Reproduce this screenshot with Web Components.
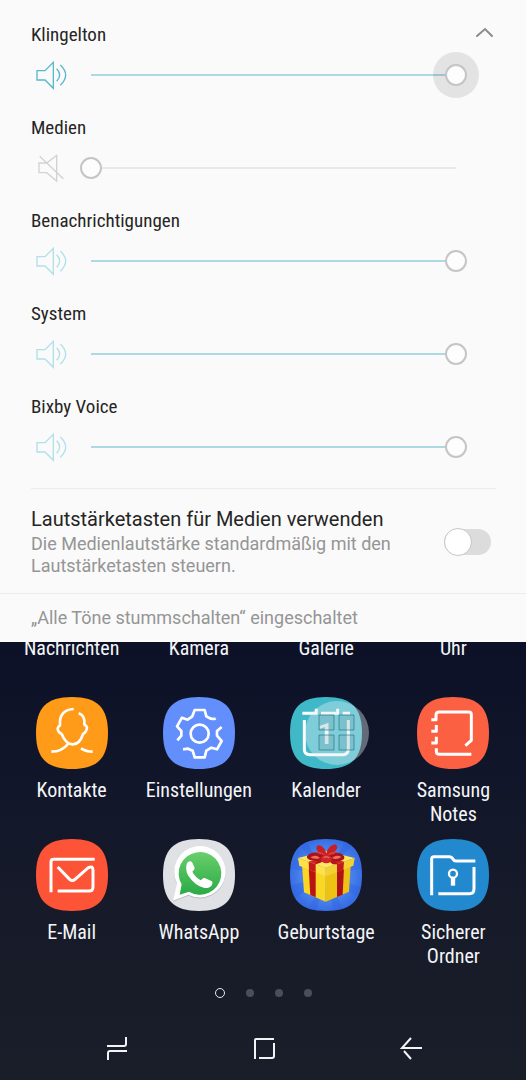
<!DOCTYPE html>
<html lang="de">
<head>
<meta charset="utf-8">
<meta name="viewport" content="width=device-width, initial-scale=1">
<title>Lautstärke</title>
<style>
	body {
		margin: 0;
		font-family: Roboto, "Liberation Sans", sans-serif;
	}
</style>
</head>
<body>
<phone-screen>
	<volume-panel slot="panel">
		<volume-row label="Klingelton" value="100" active>
			<collapse-button slot="action"></collapse-button>
		</volume-row>
		<volume-row label="Medien" value="0"></volume-row>
		<volume-row label="Benachrichtigungen" value="100"></volume-row>
		<volume-row label="System" value="100"></volume-row>
		<volume-row label="Bixby Voice" value="100"></volume-row>
		<toggle-row slot="option" label="Lautstärketasten für Medien verwenden">Die Medienlautstärke standardmäßig mit den Lautstärketasten steuern.</toggle-row>
		<span slot="status">„Alle Töne stummschalten“ eingeschaltet</span>
	</volume-panel>
	<app-grid>
		<app-tile slot="top">Nachrichten</app-tile>
		<app-tile slot="top">Kamera</app-tile>
		<app-tile slot="top">Galerie</app-tile>
		<app-tile slot="top">Uhr</app-tile>
		<app-tile icon="contacts">Kontakte</app-tile>
		<app-tile icon="settings">Einstellungen</app-tile>
		<app-tile icon="calendar">Kalender<touch-menu slot="overlay"></touch-menu></app-tile>
		<app-tile icon="notes">Samsung Notes</app-tile>
		<app-tile icon="mail">E-Mail</app-tile>
		<app-tile icon="whatsapp">WhatsApp</app-tile>
		<app-tile icon="gift">Geburtstage</app-tile>
		<app-tile icon="folder">Sicherer Ordner</app-tile>
	</app-grid>
	<page-dots count="4"></page-dots>
	<nav-bar></nav-bar>
</phone-screen>

<script>
const CONDENSED = `"Roboto Condensed", Roboto, "Liberation Sans", sans-serif`;

const SQUIRCLE = "M108 0C184 0 216 32 216 108S184 216 108 216S0 184 0 108S32 0 108 0Z";

const SPEAKER = `
	<path d="M6 35H30L55 10V88L30 63H6Z"/>
	<path d="M65 29Q83 48 65 67M76 18Q108 48 76 79"/>`;

const SPEAKER_MUTED = `<path d="M12 33H35L65 10V87L35 62H12ZM14 13L85 80"/>`;

// all app icons are drawn on a 216 unit square
const ICONS = {
	contacts: {
		color: "#ff9b18",
		art: `
			<path d="M113 36C86 37 70 54 72 80V85C63 90 64 98 68 104C70 108 74 109 77 111C84 128 96 142 110 142C126 142 136 128 141 111C150 107 152 100 153 92C152 86 148 86 145 82C147 66 142 54 128 49"/>
			<path d="M46 164C70 164 84 156 96 141M135 154C144 160 156 164 170 164"/>`
	},
	settings: {
		color: "#628ffc",
		art: `
			<circle cx="110" cy="110" r="27"/>
			<path d="M158 64Q148 70 130 58L125 39H95L88 58L74 68L57 62L42 88L55 102V116L43 130"/>
			<path d="M176 90L162 102V116L176 132L162 157L145 152L130 161L125 181H95L89 161L75 155L60 157"/>`
	},
	calendar: {
		color: "#3fb9c8",
		art: `
			<g stroke-width="9">
				<path d="M37 49H79V35M93 49H143V35M158 49H180"/>
				<path d="M43 69V157Q43 173 59 173H159Q175 173 175 157V69"/>
			</g>
			<text x="107" y="142" text-anchor="middle" font-family="Roboto, sans-serif" font-size="88" font-weight="500" fill="#fff" stroke="none">1</text>`
	},
	notes: {
		color: "#fb6043",
		art: `
			<g stroke-width="9">
				<path d="M43 68H57V54Q57 45 66 45H155Q163 45 163 53V130L145 146"/>
				<path d="M43 103H58V84M43 138H58V119M58 154V163Q58 172 67 172H163"/>
			</g>`
	},
	mail: {
		color: "#fd5337",
		art: `
			<g stroke-width="9">
				<path d="M45 160V69Q45 61 53 61H176"/>
				<path d="M65 84L101 121Q109 128 117 121L157 86Q171 79 171 94V144Q171 156 159 156H65"/>
			</g>`
	},
	whatsapp: {
		color: "#dfe1e5",
		art: `
			<defs>
				<linearGradient id="green" x1="0" y1="0" x2="0" y2="1">
					<stop offset="0" stop-color="#69cf6b"/>
					<stop offset="1" stop-color="#2aaa46"/>
				</linearGradient>
			</defs>
			<g stroke="none">
				<path d="M30 188L42 136A77 77 0 1 1 76 170Z" fill="#b9bdc0"/>
				<path d="M30 185L42 133A77 77 0 1 1 76 167Z" fill="#fff"/>
				<path d="M50 167L56 136A64 64 0 1 1 78 158Z" fill="url(#green)"/>
				<path d="M72 72Q80 62 88 71L95 86Q96 91 88 98Q96 114 114 124Q120 116 125 117L147 127Q150 130 147 138Q140 149 124 147Q96 140 76 110Q65 92 72 72Z" fill="#fff"/>
			</g>`
	},
	gift: {
		color: "url(#sky)",
		art: `
			<defs>
				<radialGradient id="sky">
					<stop offset="0" stop-color="#78b0ff"/>
					<stop offset="1" stop-color="#376ee4"/>
				</radialGradient>
			</defs>
			<g stroke="none">
				<path d="M108 108L12 60L4 90ZM108 108L3 140L16 178ZM108 108L54 210L80 214ZM108 108L130 214L160 210ZM108 108L202 175L212 145ZM108 108L212 90L207 60ZM108 108L166 7L186 20ZM108 108L30 20L50 9Z" fill="#2c62e0" opacity=".4"/>
				<path d="M36 78L107 108V188L42 160Z" fill="#f9d722"/>
				<path d="M107 108L182 78L177 158L107 188Z" fill="#edc214"/>
				<path d="M56 86L77 94V175L61 168Z" fill="#b91313"/>
				<path d="M141 94L162 86L158 167L141 174Z" fill="#b01112"/>
				<path d="M24 57L108 36L194 57L107 86Z" fill="#ffe95b"/>
				<path d="M24 57L107 86V112L28 80Z" fill="#ffe047"/>
				<path d="M194 57L107 86V112L190 80Z" fill="#f5d033"/>
				<path d="M56 68L77 76V100L57 92ZM162 68L141 76V100L160 92Z" fill="#c31919"/>
				<path d="M56 68L108 52L162 68L141 76L108 62L77 76Z" fill="#d42420"/>
				<path d="M106 52C88 46 72 30 82 20C92 14 106 28 109 44C112 28 128 12 139 18C150 28 128 47 110 52Z" fill="#c81f25"/>
				<path d="M108 54C92 36 58 36 51 52C47 66 86 71 108 60C128 72 165 69 163 54C158 38 124 36 108 54Z" fill="#a9141c"/>
				<path d="M61 55Q78 45 90 57Q76 63 61 55ZM126 57Q140 45 154 54Q140 64 126 57Z" fill="#ef7158"/>
				<path d="M79 40Q92 34 105 48Q91 49 79 40ZM114 48Q123 35 140 40Q130 50 114 48Z" fill="#e03a36"/>
				<path d="M88 60L74 76L90 72L104 64ZM128 62L144 76L128 76L114 64Z" fill="#b5161d"/>
				<ellipse cx="109" cy="60" rx="17" ry="13" fill="#cf242a"/>
				<path d="M101 56Q109 50 118 57" fill="none" stroke="#ee6258" stroke-width="4"/>
			</g>`
	},
	folder: {
		color: "#2389cf",
		art: `
			<g stroke-width="9" stroke-linecap="butt">
				<path d="M44 169V60Q44 53 51 53H98Q104 53 108 60Q111 66 117 66H175"/>
				<path d="M171 84V149Q171 164 157 164H64"/>
				<circle cx="108" cy="104" r="12" stroke-width="7"/>
				<path d="M108 116V140" stroke-width="13"/>
			</g>`
	}
};

class PhoneScreen extends HTMLElement {
	constructor() {
		super();

		this.attachShadow({ mode: "open" }).innerHTML = `
		<style>
			:host {
				display: flex;
				flex-direction: column;
				min-height: 100vh;
				background: linear-gradient(#0c1127 60%, #10152a 70%, #171b29 86%, #1a1e29);
			}
			main {
				flex: 1;
				margin-top: -6px;
			}
		</style>
		<slot name="panel"></slot>
		<main><slot></slot></main>`;
	}
}

class VolumePanel extends HTMLElement {
	constructor() {
		super();

		this.attachShadow({ mode: "open" }).innerHTML = `
		<style>
			:host {
				display: block;
				position: relative;
				z-index: 1;
				background: #fafafa;
				color: #252525;
			}
			.rows {
				padding: 23px 30px 0 31px;
			}
			.option {
				margin: 0 30px 0 31px;
				border-top: 1px solid #ececec;
			}
			.status {
				padding: 12px 30px 12px 31px;
				border-top: 1px solid #ececec;
				color: #959595;
				font-size: 18px;
				line-height: 24px;
			}
		</style>
		<div class="rows"><slot></slot></div>
		<div class="option"><slot name="option"></slot></div>
		<div class="status"><slot name="status"></slot></div>`;
	}
}

class VolumeRow extends HTMLElement {
	constructor() {
		super();

		this.attachShadow({ mode: "open" });
	}

	get label() {
		return this.getAttribute("label");
	}

	get value() {
		return Number(this.getAttribute("value"));
	}

	connectedCallback() {
		this.render();
	}

	render() {
		this.shadowRoot.innerHTML = `
		<style>
			:host {
				display: block;
				padding-bottom: 18px;
				--icon: #b0e0e9;
			}
			:host([active]) {
				--icon: #57b9cb;
			}
			:host([value="0"]) {
				--icon: #d2d2d2;
			}
			.head {
				display: flex;
				justify-content: space-between;
				align-items: center;
				height: 24px;
			}
			label {
				font: 19px/24px ${CONDENSED};
			}
			.control {
				display: flex;
				align-items: center;
				gap: 13px;
				height: 46px;
				margin: 5px 29px 0 4px;
			}
			svg {
				flex: none;
				width: 32px;
				height: 32px;
				fill: none;
				stroke: var(--icon);
				stroke-width: 4;
			}
			input {
				flex: 1;
				min-width: 0;
				height: 22px;
				margin: 0;
				appearance: none;
				outline: none;
				background:
					linear-gradient(90deg, #add9e2 var(--level), #e8e8e8 var(--level))
					center / calc(100% - 22px) 2px no-repeat;
			}
			input::-webkit-slider-thumb {
				appearance: none;
				box-sizing: border-box;
				width: 22px;
				height: 22px;
				border: 2px solid #c5c5c5;
				border-radius: 50%;
				background: #fdfdfd;
			}
			:host([active]) input::-webkit-slider-thumb {
				box-shadow: 0 0 0 12px rgba(0, 0, 0, 0.09);
			}
		</style>
		<div class="head">
			<label for="level">${this.label}</label>
			<slot name="action"></slot>
		</div>
		<div class="control">
			<svg viewBox="0 0 96 96" aria-hidden="true"></svg>
			<input id="level" type="range" min="0" max="100" value="${this.value}">
		</div>`;

		const input = this.shadowRoot.querySelector("input");
		input.addEventListener("input", () => this.update(Number(input.value)));
		this.update(this.value);
	}

	update(value) {
		this.setAttribute("value", value);
		this.shadowRoot.querySelector("input").style.setProperty("--level", `${value}%`);
		this.shadowRoot.querySelector("svg").innerHTML = value ? SPEAKER : SPEAKER_MUTED;
	}
}

class CollapseButton extends HTMLElement {
	constructor() {
		super();

		this.attachShadow({ mode: "open" }).innerHTML = `
		<style>
			:host {
				display: block;
			}
			button {
				display: block;
				width: 24px;
				height: 24px;
				padding: 0;
				border: 0;
				background: none;
			}
			svg {
				display: block;
				fill: none;
				stroke: #8b8b8b;
				stroke-width: 2;
				stroke-linecap: round;
			}
		</style>
		<button type="button" aria-label="Einklappen">
			<svg width="24" height="24" viewBox="0 0 24 24"><path d="M5 13L13 6L20 13"/></svg>
		</button>`;
	}
}

class ToggleRow extends HTMLElement {
	constructor() {
		super();

		this.attachShadow({ mode: "open" });
	}

	connectedCallback() {
		this.shadowRoot.innerHTML = `
		<style>
			:host {
				display: flex;
				align-items: center;
				justify-content: space-between;
				gap: 32px;
				padding: 17px 5px 16px 0;
			}
			label {
				display: block;
				font-size: 20px;
				line-height: 26px;
			}
			p {
				margin: 1px 0 0;
				color: #959595;
				font-size: 18px;
				line-height: 22px;
			}
			input {
				flex: none;
				display: flex;
				align-items: center;
				appearance: none;
				width: 47px;
				height: 26px;
				margin: 0;
				border-radius: 13px;
				background: #dcdcdc;
			}
			input::before {
				content: "";
				box-sizing: border-box;
				width: 28px;
				height: 28px;
				border: 1px solid #c6c6c6;
				border-radius: 50%;
				background: #fff;
				flex: none;
			}
			input:checked {
				justify-content: flex-end;
				background: #add9e2;
			}
		</style>
		<div>
			<label for="toggle">${this.getAttribute("label")}</label>
			<p id="hint"><slot></slot></p>
		</div>
		<input id="toggle" type="checkbox" aria-describedby="hint">`;
	}
}

class AppGrid extends HTMLElement {
	constructor() {
		super();

		this.attachShadow({ mode: "open" }).innerHTML = `
		<style>
			:host {
				display: block;
				padding: 0 9px 0 8px;
			}
			div {
				display: grid;
				grid-template-columns: repeat(4, 1fr);
				row-gap: 13px;
			}
			.top {
				margin-bottom: 37px;
			}
		</style>
		<div class="top"><slot name="top"></slot></div>
		<div><slot></slot></div>`;
	}
}

class AppTile extends HTMLElement {
	constructor() {
		super();

		this.attachShadow({ mode: "open" });
	}

	connectedCallback() {
		const icon = ICONS[this.getAttribute("icon")];

		this.shadowRoot.innerHTML = `
		<style>
			:host {
				display: block;
				position: relative;
			}
			a {
				display: flex;
				flex-direction: column;
				align-items: center;
				gap: 9px;
				color: #f4f5f8;
				text-align: center;
				text-decoration: none;
				font: 20px/24px ${CONDENSED};
			}
			svg {
				width: 72px;
				height: 72px;
			}
			span {
				max-width: 112px;
			}
		</style>
		<a href="#">
			${icon ? `
			<svg viewBox="0 0 216 216" aria-hidden="true" fill="none" stroke="#fff" stroke-width="8" stroke-linejoin="round">
				<path d="${SQUIRCLE}" fill="${icon.color}" stroke="none"/>
				${icon.art}
			</svg>` : ""}
			<span><slot></slot></span>
		</a>
		<slot name="overlay"></slot>`;
	}
}

// translucent assistant bubble that floats over the home screen
class TouchMenu extends HTMLElement {
	constructor() {
		super();

		this.attachShadow({ mode: "open" }).innerHTML = `
		<style>
			:host {
				position: absolute;
				top: 4px;
				left: calc(50% - 21px);
			}
			button {
				display: block;
				width: 64px;
				height: 64px;
				padding: 0;
				border: 0;
				border-radius: 50%;
				background: rgba(225, 235, 240, 0.4);
			}
			svg {
				display: block;
				fill: rgba(90, 125, 140, 0.15);
				stroke: rgba(35, 105, 125, 0.6);
				stroke-width: 1;
			}
		</style>
		<button type="button" aria-label="Assistenzmenü">
			<svg width="64" height="64" viewBox="0 0 64 64">
				<path d="M14 14h15v15h-15zM34 14h15v15h-15zM14 34h15v15h-15zM34 34h15v15h-15z"/>
			</svg>
		</button>`;
	}
}

class PageDots extends HTMLElement {
	constructor() {
		super();

		this.attachShadow({ mode: "open" });
	}

	connectedCallback() {
		const count = Number(this.getAttribute("count"));

		this.shadowRoot.innerHTML = `
		<style>
			:host {
				display: flex;
				justify-content: center;
				align-items: center;
				gap: 21px;
				height: 10px;
				margin: 20px 0 26px;
			}
			i {
				box-sizing: border-box;
				width: 8px;
				height: 8px;
				border-radius: 50%;
				background: #4b4e58;
			}
			i:first-of-type {
				width: 10px;
				height: 10px;
				border: 1px solid #e8e9ec;
				background: none;
			}
		</style>
		${"<i></i>".repeat(count)}`;
	}
}

class NavBar extends HTMLElement {
	constructor() {
		super();

		this.attachShadow({ mode: "open" }).innerHTML = `
		<style>
			:host {
				display: block;
				padding: 0 41px 8px 43px;
			}
			nav {
				display: grid;
				grid-template-columns: repeat(3, 1fr);
			}
			button {
				display: flex;
				justify-content: center;
				align-items: center;
				height: 48px;
				padding: 0;
				border: 0;
				background: none;
			}
			svg {
				width: 24px;
				height: 24px;
				fill: none;
				stroke: #f2f3f5;
				stroke-width: 2;
			}
		</style>
		<nav>
			<button type="button" aria-label="Letzte Apps">
				<svg viewBox="0 0 24 24"><path d="M2 10H19Q21 10 21 8V1M22 15H5Q3 15 3 17V24"/></svg>
			</button>
			<button type="button" aria-label="Startseite">
				<svg viewBox="0 0 24 24"><path d="M3 23V4Q3 3 4 3H22M22 7V20Q22 22 20 22H7"/></svg>
			</button>
			<button type="button" aria-label="Zurück">
				<svg viewBox="0 0 24 24"><path d="M12 2L3 12H23M5 15L12 23"/></svg>
			</button>
		</nav>`;
	}
}

customElements.define("phone-screen", PhoneScreen);
customElements.define("volume-panel", VolumePanel);
customElements.define("volume-row", VolumeRow);
customElements.define("collapse-button", CollapseButton);
customElements.define("toggle-row", ToggleRow);
customElements.define("app-grid", AppGrid);
customElements.define("app-tile", AppTile);
customElements.define("touch-menu", TouchMenu);
customElements.define("page-dots", PageDots);
customElements.define("nav-bar", NavBar);
</script>
</body>
</html>
